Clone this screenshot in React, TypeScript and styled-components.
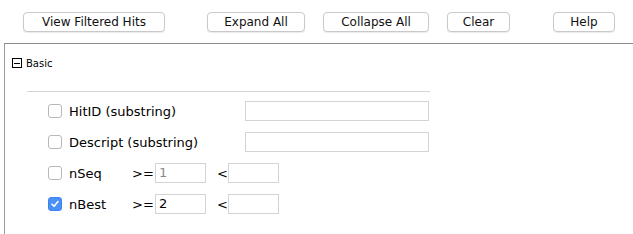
import React from 'react';
import styled, { createGlobalStyle } from 'styled-components';

const GlobalStyle = createGlobalStyle`
    html, body {
        margin: 0;
        padding: 0;
        background: #fff;
    }
    body {
        font-family: 'DejaVu Sans', 'Liberation Sans', sans-serif;
        color: #000;
    }
`;

const Page = styled.div`
    width: 633px;
    height: 234px;
    overflow: hidden;
    display: flex;
    flex-direction: column;
`;

const Toolbar = styled.div`
    display: flex;
    align-items: center;
    padding: 12px 0 0 23px;
    height: 20px;
`;

const Button = styled.button<{ $width: number; $gap?: number }>`
    width: ${(p) => p.$width}px;
    height: 20px;
    margin-left: ${(p) => p.$gap || 0}px;
    padding: 0;
    background: #fff;
    border: 1px solid #c9c9c9;
    border-radius: 4px;
    box-shadow: 0 1px 1px rgba(0, 0, 0, 0.08);
    font-family: 'DejaVu Sans', 'Liberation Sans', sans-serif;
    font-size: 12px;
    color: #111;
    cursor: pointer;
`;

const Panel = styled.div`
    margin: 11px 0 0 4px;
    flex: 1;
    border-top: 1px solid #8c8c8c;
    border-left: 1px solid #9a9a9a;
    display: flex;
    flex-direction: column;
`;

const SectionHeader = styled.div`
    display: flex;
    align-items: center;
    gap: 4px;
    padding: 13px 0 0 7px;
    height: 12px;
    font-size: 10px;
`;

const Toggle = styled.span`
    width: 8px;
    height: 8px;
    border: 1px solid #000;
    position: relative;
    &::after {
        content: '';
        position: absolute;
        left: 1px;
        right: 1px;
        top: 3.5px;
        height: 1px;
        background: #000;
    }
`;

const Divider = styled.div`
    margin: 22px 0 0 22px;
    width: 403px;
    border-top: 1px solid #d6d6d6;
`;

const Rows = styled.div`
    display: flex;
    flex-direction: column;
    gap: 11px;
    padding: 9px 0 0 43px;
`;

const Row = styled.div`
    display: flex;
    align-items: center;
    height: 20px;
    font-size: 13px;
`;

const Check = styled.span<{ $on?: boolean }>`
    box-sizing: border-box;
    width: 14px;
    height: 14px;
    border-radius: 3px;
    border: 1px solid ${(p) => (p.$on ? '#3a86f0' : '#b8b8b8')};
    background: ${(p) => (p.$on ? '#4a90f5' : '#fff')};
    display: flex;
    align-items: center;
    justify-content: center;
    margin-right: 7px;
`;

const Label = styled.span<{ $width: number }>`
    width: ${(p) => p.$width}px;
    white-space: nowrap;
`;

const Op = styled.span<{ $width: number; $gap?: number }>`
    width: ${(p) => p.$width}px;
    margin-left: ${(p) => p.$gap || 0}px;
    white-space: nowrap;
`;

const Field = styled.div<{ $width: number; $dim?: boolean }>`
    box-sizing: border-box;
    width: ${(p) => p.$width}px;
    height: 20px;
    border: 1px solid #d4d4d4;
    padding: 0 3px;
    line-height: 18px;
    font-size: 13px;
    color: ${(p) => (p.$dim ? '#8a8a8a' : '#000')};
`;

function CheckBox({ on }: { on?: boolean }) {
    return (
        <Check $on={on}>
            {on && (
                <svg width="10" height="10" viewBox="0 0 10 10">
                    <path d="M2 5.2 L4.1 7.3 L8 2.6" fill="none" stroke="#fff" strokeWidth="1.6" strokeLinecap="round" strokeLinejoin="round" />
                </svg>
            )}
        </Check>
    );
}

const buttons = [
    { text: 'View Filtered Hits', width: 142, gap: 0 },
    { text: 'Expand All', width: 98, gap: 42 },
    { text: 'Collapse All', width: 106, gap: 18 },
    { text: 'Clear', width: 63, gap: 18 },
    { text: 'Help', width: 62, gap: 43 },
];

function App() {
    return (
        <Page>
            <GlobalStyle />
            <Toolbar>
                {buttons.map((b) => (
                    <Button key={b.text} $width={b.width} $gap={b.gap}>
                        {b.text}
                    </Button>
                ))}
            </Toolbar>
            <Panel>
                <SectionHeader>
                    <Toggle />
                    Basic
                </SectionHeader>
                <Divider />
                <Rows>
                    <Row>
                        <CheckBox />
                        <Label $width={176}>HitID (substring)</Label>
                        <Field $width={184} />
                    </Row>
                    <Row>
                        <CheckBox />
                        <Label $width={176}>Descript (substring)</Label>
                        <Field $width={184} />
                    </Row>
                    <Row>
                        <CheckBox />
                        <Label $width={63}>nSeq</Label>
                        <Op $width={23}>&gt;=</Op>
                        <Field $width={51} $dim>1</Field>
                        <Op $width={11} $gap={11}>&lt;</Op>
                        <Field $width={51} />
                    </Row>
                    <Row>
                        <CheckBox on />
                        <Label $width={63}>nBest</Label>
                        <Op $width={23}>&gt;=</Op>
                        <Field $width={51}>2</Field>
                        <Op $width={11} $gap={11}>&lt;</Op>
                        <Field $width={51} />
                    </Row>
                </Rows>
            </Panel>
        </Page>
    );
}

export default App;
